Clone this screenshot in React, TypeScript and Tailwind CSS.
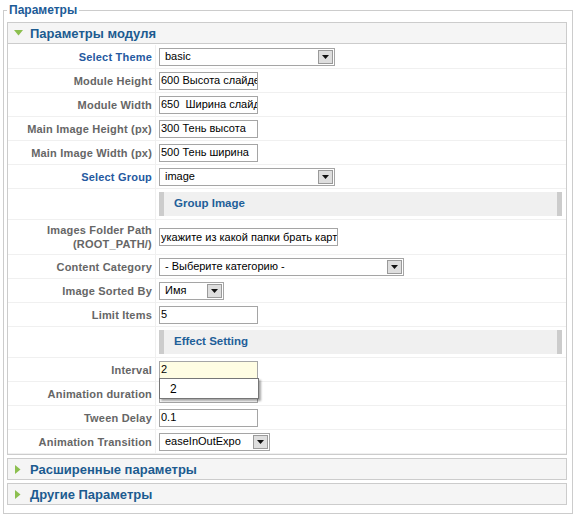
import type { ReactNode } from "react";

function Arrow({ open }: { open?: boolean }) {
  return open ? (
    <svg width="9" height="6" viewBox="0 0 9 6" className="shrink-0">
      <path d="M0 0 H9 L4.5 5.5 Z" fill="#8cbf4f" />
    </svg>
  ) : (
    <svg width="6" height="9" viewBox="0 0 6 9" className="shrink-0">
      <path d="M0 0 V9 L5.5 4.5 Z" fill="#8cbf4f" />
    </svg>
  );
}

function PanelHeader({ title, open }: { title: string; open?: boolean }) {
  return (
    <div className={`flex h-[22px] items-center border border-[#cccccc] bg-[#f5f5f5] ${open ? "gap-[7px] pl-[6px]" : "gap-[9px] pl-[7px]"}`}>
      <Arrow open={open} />
      <span className="text-[13px] font-bold leading-none text-[#1c5b90]">{title}</span>
    </div>
  );
}

function TextBox({ value, width, bg = "bg-white" }: { value: string; width: string; bg?: string }) {
  return (
    <div className={`${width} ${bg} flex h-[18px] items-center overflow-hidden whitespace-pre border border-[#a5a5a5] pl-[1px] text-[11px] text-black`}>
      {value}
    </div>
  );
}

function SelectBox({ value, width }: { value: string; width: string }) {
  return (
    <div className={`${width} flex h-[18px] items-center border border-[#a5a5a5] bg-white text-[11px] text-black`}>
      <span className="flex-1 overflow-hidden whitespace-nowrap pl-[5px]">{value}</span>
      <span className="mr-[1px] flex h-[14px] w-[15px] items-center justify-center border border-[#9a9a9a] bg-[#dedede]">
        <svg width="7" height="4" viewBox="0 0 7 4">
          <path d="M0 0 H7 L3.5 4 Z" fill="#111" />
        </svg>
      </span>
    </div>
  );
}

function Row({ label, blue, h, children }: { label?: ReactNode; blue?: boolean; h: string; children: ReactNode }) {
  return (
    <div className={`grid ${h} grid-cols-[148px_1fr] border-b border-[#f0f0f0]`}>
      <div
        className={`flex items-center justify-end border-r border-[#f0f0f0] pr-[3px] text-right text-[11px] font-bold leading-[14px] tracking-[0.2px] ${
          blue ? "text-[#2559a0]" : "text-[#666666]"
        }`}
      >
        {label}
      </div>
      <div className="relative flex items-center pl-[3px]">{children}</div>
    </div>
  );
}

function SubHeader({ title }: { title: string }) {
  return (
    <div className="mr-[4px] flex h-[24px] flex-1 items-center border-x-[5px] border-[#cccccc] bg-[#f0f0f0] pl-[10px] text-[11.5px] font-bold text-[#1f5f99]">
      {title}
    </div>
  );
}

export default function App() {
  return (
    <div className="h-[521px] w-[577px] overflow-hidden bg-white pt-[3px] font-['Liberation_Sans',Arial,sans-serif]">
      <fieldset className="ml-[3px] h-[511px] w-[570px] border border-[#cccccc] pb-[7px] pl-[3px] pr-[5px]">
        <legend className="px-[2px] text-[12px] font-bold leading-[14px] text-[#1c5b97]">Параметры</legend>
        <div className="mt-[5px]">
          <PanelHeader title="Параметры модуля" open />
          <div className="border-x border-b border-[#cccccc] pt-[1px]">
            <Row label="Select Theme" blue h="h-[24px]">
              <SelectBox value="basic" width="w-[176px]" />
            </Row>
            <Row label="Module Height" h="h-[24px]">
              <TextBox value="600 Высота слайдера" width="w-[99px]" />
            </Row>
            <Row label="Module Width" h="h-[24px]">
              <TextBox value="650  Ширина слайдера" width="w-[99px]" />
            </Row>
            <Row label="Main Image Height (px)" h="h-[24px]">
              <TextBox value="300 Тень высота" width="w-[99px]" />
            </Row>
            <Row label="Main Image Width (px)" h="h-[24px]">
              <TextBox value="500 Тень ширина" width="w-[99px]" />
            </Row>
            <Row label="Select Group" blue h="h-[24px]">
              <SelectBox value="image" width="w-[176px]" />
            </Row>
            <Row h="h-[31px]">
              <SubHeader title="Group Image" />
            </Row>
            <Row
              h="h-[35px]"
              label={
                <span>
                  Images Folder Path
                  <br />
                  (ROOT_PATH/)
                </span>
              }
            >
              <TextBox value="укажите из какой папки брать картинки" width="w-[179px]" />
            </Row>
            <Row label="Content Category" h="h-[24px]">
              <SelectBox value="- Выберите категорию -" width="w-[245px]" />
            </Row>
            <Row label="Image Sorted By" h="h-[24px]">
              <SelectBox value="Имя" width="w-[65px]" />
            </Row>
            <Row label="Limit Items" h="h-[24px]">
              <TextBox value="5" width="w-[99px]" />
            </Row>
            <Row h="h-[31px]">
              <SubHeader title="Effect Setting" />
            </Row>
            <Row label="Interval" h="h-[24px]">
              <TextBox value="2" width="w-[99px]" bg="bg-[#fffde3]" />
              <div className="absolute left-[3px] top-[20px] z-10 flex h-[21px] w-[100px] items-center border border-[#767676] bg-white pl-[10px] text-[12px] text-black shadow-[2px_2px_2px_rgba(0,0,0,0.35)]">
                2
              </div>
            </Row>
            <Row label="Animation duration" h="h-[24px]">
              <TextBox value="" width="w-[99px]" />
            </Row>
            <Row label="Tween Delay" h="h-[24px]">
              <TextBox value="0.1" width="w-[99px]" />
            </Row>
            <Row label="Animation Transition" h="h-[24px]">
              <SelectBox value="easeInOutExpo" width="w-[111px]" />
            </Row>
          </div>
        </div>
        <div className="mt-[3px]">
          <PanelHeader title="Расширенные параметры" />
        </div>
        <div className="mt-[3px]">
          <PanelHeader title="Другие Параметры" />
        </div>
      </fieldset>
    </div>
  );
}
